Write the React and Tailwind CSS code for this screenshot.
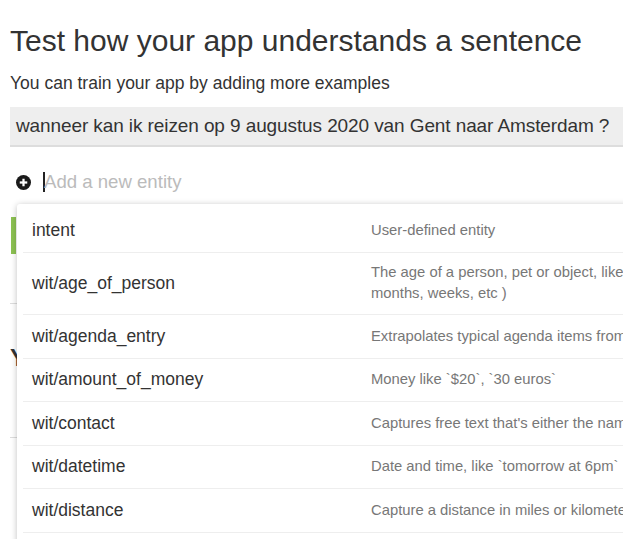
import React from 'react';

const entities = [
  { name: 'intent', desc: ['User-defined entity'] },
  {
    name: 'wit/age_of_person',
    desc: ['The age of a person, pet or object, like `5 years old` (years,', 'months, weeks, etc )'],
  },
  { name: 'wit/agenda_entry', desc: ['Extrapolates typical agenda items from free text'] },
  { name: 'wit/amount_of_money', desc: ['Money like `$20`, `30 euros`'] },
  { name: 'wit/contact', desc: ["Captures free text that's either the name or a clear reference"] },
  { name: 'wit/datetime', desc: ['Date and time, like `tomorrow at 6pm`'] },
  { name: 'wit/distance', desc: ['Capture a distance in miles or kilometers'] },
  { name: 'wit/duration', desc: ['Duration, like `30 minutes`'] },
];

const PlusCircle = () => (
  <svg width="15" height="15" viewBox="0 0 16 16" className="shrink-0">
    <circle cx="8" cy="8" r="8" fill="#1a1a1a" />
    <rect x="4" y="6.8" width="8" height="2.4" fill="#fff" />
    <rect x="6.8" y="4" width="2.4" height="8" fill="#fff" />
  </svg>
);

export default function App() {
  return (
    <div className="relative w-[623px] h-[539px] overflow-hidden bg-white font-['Liberation_Sans',Arial,sans-serif] text-[#333]">
      <div className="w-[720px] pl-[10px]">
        <h1 className="pt-[24px] text-[30px] leading-[33px]">
          Test how your app understands a sentence
        </h1>
        <p className="mt-[16px] text-[17.5px] leading-[20px]">
          You can train your app by adding more examples
        </p>
        <div className="mt-[14px] h-[40px] bg-[#eee] border-b-2 border-[#ddd] flex items-center pl-[6px] text-[19px] tracking-[-0.1px]">
          wanneer kan ik reizen op 9 augustus 2020 van Gent naar Amsterdam ?
        </div>
        <div className="mt-[24px] flex items-center h-[22px] pl-[6px]">
          <PlusCircle />
          <span className="ml-[12px] w-[2px] h-[20px] bg-[#222]" />
          <span className="-ml-[1px] text-[18.6px] text-[#bbb]">Add a new entity</span>
        </div>

        {/* content under the dropdown */}
        <div className="mt-[24px]">
          <div className="h-[37px] border-l-[5px] border-[#8cc152] ml-[1px]" />
          <div className="h-[50px] border-b border-[#ddd]" />
          <div className="mt-[44px] text-[24px] font-bold leading-[20px] text-[#333]">Your entities</div>
          <div className="h-[70px] border-b border-[#ddd]" />
        </div>
      </div>

      <div className="absolute left-[17px] top-[204px] w-[720px] bg-white rounded-[3px] shadow-[0_1px_6px_rgba(0,0,0,0.25)] pt-[5px] px-[6px]">
        {entities.map((e) => (
          <div key={e.name} className="flex items-center border-b border-[#eee] py-[9.75px]">
            <div className="w-[348px] shrink-0 pl-[9px] text-[17.5px] leading-[23px] text-[#333]">{e.name}</div>
            <div className="text-[14.8px] leading-[21px] text-[#777] whitespace-nowrap">
              {e.desc.map((d) => (
                <div key={d}>{d}</div>
              ))}
            </div>
          </div>
        ))}
      </div>
    </div>
  );
}
